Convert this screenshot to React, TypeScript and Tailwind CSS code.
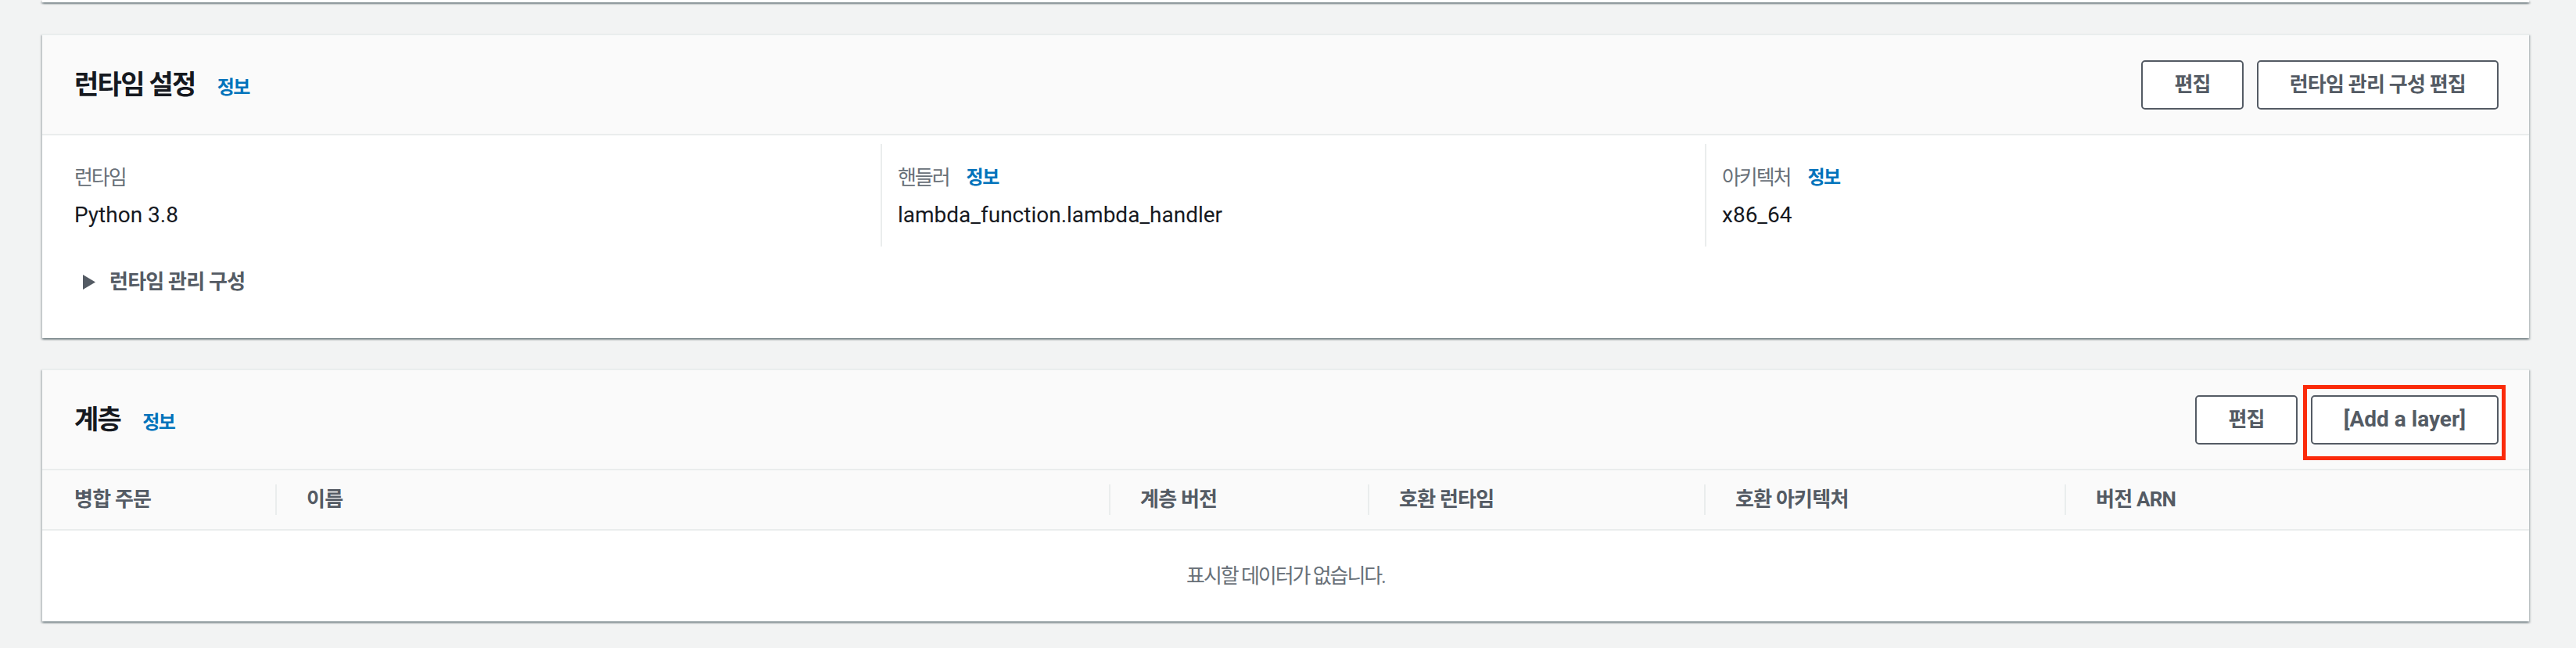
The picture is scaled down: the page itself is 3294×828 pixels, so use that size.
const shadow =
  "shadow-[0_2px_2px_0_rgba(0,28,36,0.3),2px_2px_2px_0_rgba(0,28,36,0.15),-2px_2px_2px_0_rgba(0,28,36,0.15)]"

const Card = ({ children }: { children: React.ReactNode }) => (
  <div className={`bg-white border-t-2 border-[#eaeded] ${shadow}`}>{children}</div>
)

const Info = ({ className = "" }: { className?: string }) => (
  <span className={`text-[24px] font-bold text-[#0073bb] tracking-[-0.06em] ${className}`}>정보</span>
)

const Button = ({ children, latin = false }: { children: React.ReactNode; latin?: boolean }) => (
  <button
    className={`h-[63px] px-[40px] border-2 border-[#545b64] rounded-[5px] bg-white text-[#545b64] font-bold leading-none ${
      latin ? "text-[28px]" : "text-[26px] tracking-[-0.03em]"
    }`}
  >
    {children}
  </button>
)

const Header = ({ title, children }: { title: string; children: React.ReactNode }) => (
  <div className="h-[128px] bg-[#fafafa] border-b-2 border-[#eaeded] flex items-center justify-between pl-[41px] pr-[39px]">
    <div className="flex items-baseline">
      <h2 className="text-[34px] font-bold tracking-[-0.05em] text-[#16191f]">{title}</h2>
      <Info className="ml-[28px]" />
    </div>
    <div className="flex items-center gap-[17px]">{children}</div>
  </div>
)

const Field = ({ label, value, info, divider }: { label: string; value: string; info?: boolean; divider?: boolean }) => (
  <div className={`h-[131px] pt-[23px] ${divider ? "border-l-2 border-[#eaeded] pl-[20px]" : ""}`}>
    <div className="h-[40px] flex items-center">
      <span className="text-[26px] tracking-[-0.08em] text-[#687078]">{label}</span>
      {info && <Info className="ml-[22px]" />}
    </div>
    <div className="mt-[8px] h-[40px] flex items-center text-[28px] text-[#16191f]">{value}</div>
  </div>
)

const columns = [
  { label: "병합 주문", w: "w-[298px]" },
  { label: "이름", w: "w-[1066px]" },
  { label: "계층 버전", w: "w-[331px]" },
  { label: "호환 런타임", w: "w-[430px]" },
  { label: "호환 아키텍처", w: "w-[461px]" },
  { label: "버전 ARN", w: "flex-1" },
]

export default function App() {
  return (
    <div className="h-[828px] overflow-hidden bg-[#f2f3f3] pl-[54px] pr-[60px] font-['Roboto','Noto_Sans_CJK_KR',sans-serif]">
      <div className={`h-[3px] bg-white ${shadow}`} />

      <div className="mt-[40px]">
        <Card>
          <Header title="런타임 설정">
            <Button>편집</Button>
            <Button>런타임 관리 구성 편집</Button>
          </Header>
          <div className="pl-[41px] pr-[40px] pt-[11px] pb-[52px]">
            <div className="grid grid-cols-[1031px_1054px_1fr]">
              <Field label="런타임" value="Python 3.8" />
              <Field label="핸들러" value="lambda_function.lambda_handler" info divider />
              <Field label="아키텍처" value="x86_64" info divider />
            </div>
            <div className="mt-[25px] h-[40px] flex items-center pl-[11px]">
              <svg width="16" height="19" viewBox="0 0 16 19">
                <polygon points="0,0 16,9.5 0,19" fill="#545b64" />
              </svg>
              <span className="ml-[18px] text-[26px] font-bold tracking-[-0.03em] text-[#545b64]">런타임 관리 구성</span>
            </div>
          </div>
        </Card>
      </div>

      <div className="mt-[39px]">
        <Card>
          <Header title="계층">
            <Button>편집</Button>
            <div className="relative">
              <Button latin>[Add a layer]</Button>
              <div className="absolute -left-[10px] -right-[9px] -top-[13px] -bottom-[20px] border-[5px] border-[#fa2a0a] pointer-events-none" />
            </div>
          </Header>
          <div className="h-[77px] bg-[#fafafa] border-b-2 border-[#eaeded] flex">
            {columns.map((c, i) => (
              <div key={c.label} className={`${c.w} h-full flex items-center`}>
                {i > 0 && <div className="w-[2px] h-[39px] bg-[#eaeded]" />}
                <span
                  className={`${i === 0 ? "pl-[41px]" : "pl-[38px]"} text-[26px] font-bold tracking-[-0.03em] text-[#545b64]`}
                >
                  {c.label}
                </span>
              </div>
            ))}
          </div>
          <div className="h-[116px] flex items-center justify-center">
            <span className="text-[26px] tracking-[-0.08em] text-[#687078]">표시할 데이터가 없습니다.</span>
          </div>
        </Card>
      </div>
    </div>
  )
}
